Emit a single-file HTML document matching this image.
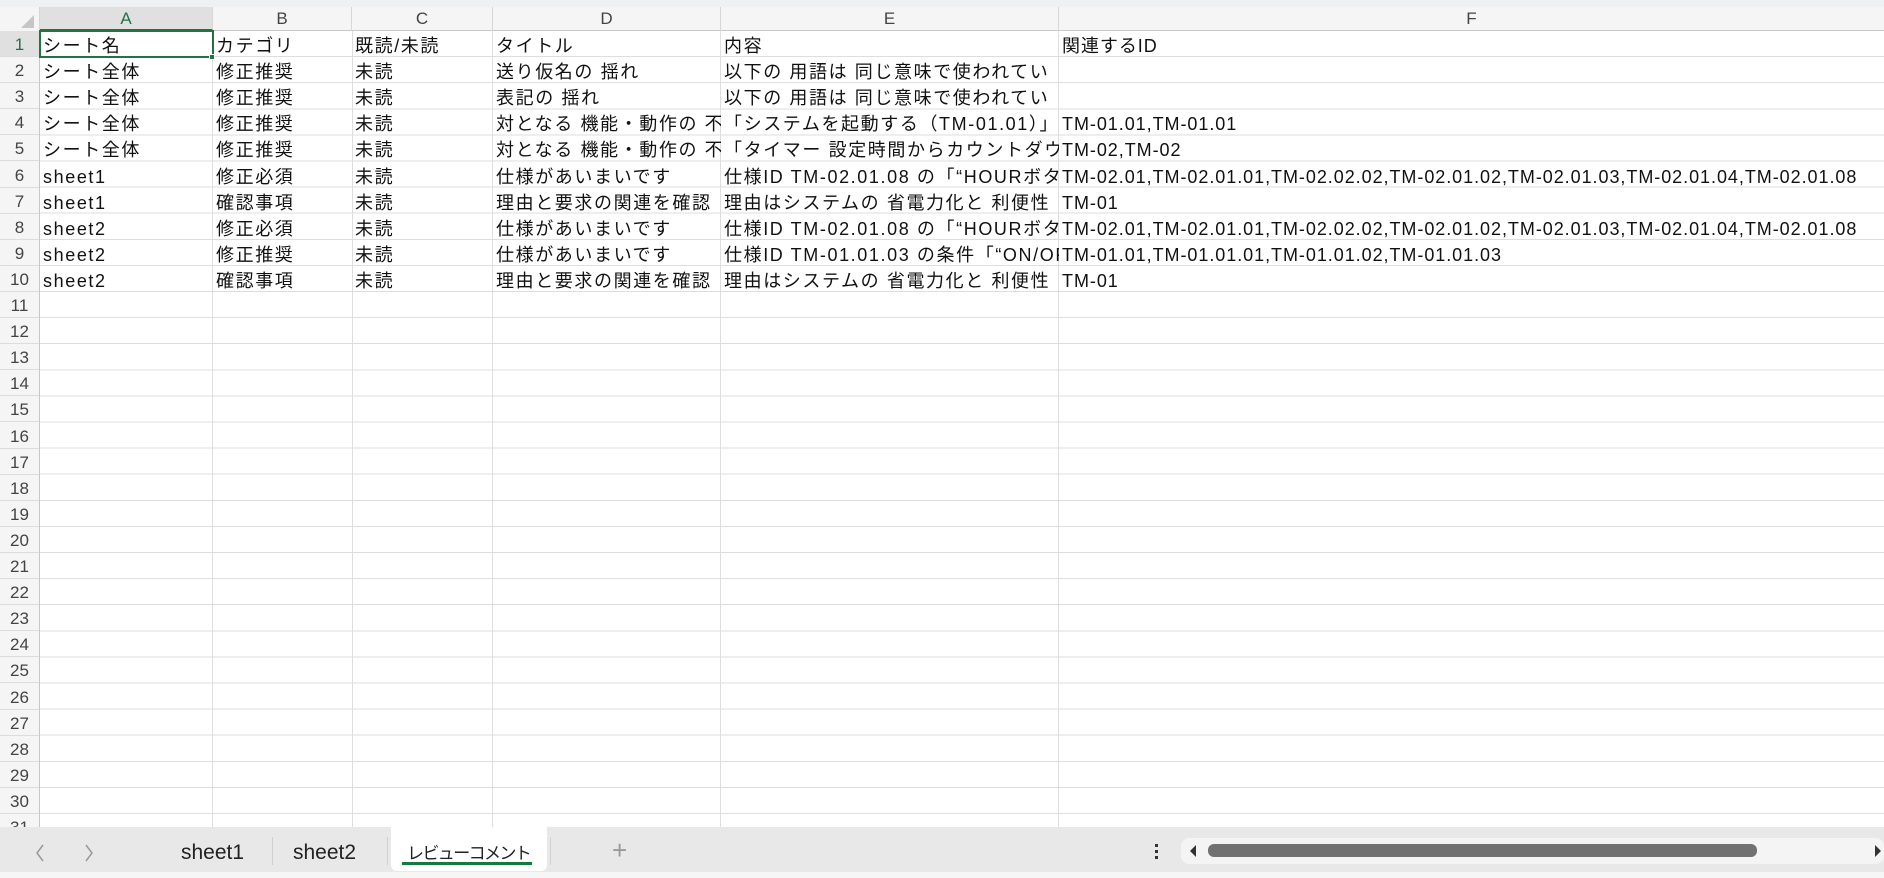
<!DOCTYPE html>
<html><head><meta charset="utf-8">
<style>
*{margin:0;padding:0;box-sizing:border-box}
html,body{width:1884px;height:878px;overflow:hidden;background:#fff;font-family:"Liberation Sans","Noto Sans CJK JP",sans-serif}
#top{position:absolute;left:0;top:0;width:1884px;height:7px;background:#eef0f3}
#colh{position:absolute;left:0;top:7px;width:1884px;height:24px;background:#f5f5f5;border-bottom:1px solid #c8c8c8}
.ch{position:absolute;top:0;height:24px;line-height:24px;text-align:center;font-size:17px;color:#444;border-right:1px solid #d6d6d6}
#rowh{position:absolute;left:0;top:31px;width:40px;height:796px;background:#f5f5f5;border-right:1px solid #c8c8c8}
.rn{position:absolute;left:0;width:39px;height:26.1px;line-height:28px;text-align:center;font-size:17px;color:#444;border-bottom:1px solid #dcdcdc}
#grid{position:absolute;left:40px;top:31px;width:1844px;height:796px;background:repeating-linear-gradient(to bottom,transparent 0,transparent 25.1px,#dedede 25.1px,#dedede 26.1px)}
.vl{position:absolute;top:31px;width:1px;height:796px;background:#dedede}
.row{position:absolute;left:0;width:1884px;height:26.1px;font-size:18px;color:#111;line-height:30px}
.row span{position:absolute;top:0;height:25px;overflow:hidden;white-space:nowrap;padding-left:3px;letter-spacing:1.6px}
.a{left:40px;width:173px}.b{left:213px;width:139px}.c{left:352px;width:141px}.d{left:493px;width:228px}.e{left:721px;width:338px}.row .f{left:1059px;width:825px;letter-spacing:0.95px}
#sel{position:absolute;left:39px;top:30px;width:175px;height:28px;border:2px solid #217346}
#selh{position:absolute;left:209px;top:54px;width:6px;height:6px;background:#217346;border:1px solid #fff}
#tabs{position:absolute;left:0;top:827px;width:1884px;height:51px;background:#e9e8e8}
.tt{position:absolute;top:14px;font-size:21px;color:#222}
.sep{position:absolute;top:10px;width:1px;height:28px;background:#d0d0d0}
</style></head><body>
<div id="top"></div>
<div id="colh">
<div class="ch" style="left:0;width:40px;background:#f5f5f5"><svg width="40" height="24"><polygon points="34,8 34,21 21,21" fill="#c6c6c6"/></svg></div>
<div class="ch" style="left:40px;width:173px;background:#e0e0e0;color:#217346;border-bottom:2px solid #217346">A</div>
<div class="ch" style="left:213px;width:139px">B</div>
<div class="ch" style="left:352px;width:141px">C</div>
<div class="ch" style="left:493px;width:228px">D</div>
<div class="ch" style="left:721px;width:338px">E</div>
<div class="ch" style="left:1059px;width:825px;border-right:none">F</div>
</div>
<div id="grid"></div>
<div class="vl" style="left:212px"></div><div class="vl" style="left:352px"></div><div class="vl" style="left:492px"></div><div class="vl" style="left:720px"></div><div class="vl" style="left:1058px"></div>
<div id="rowh">
<div class="rn" style="top:0;background:#e0e0e0;color:#217346">1</div>
<div class="rn" style="top:26.1px">2</div><div class="rn" style="top:52.2px">3</div><div class="rn" style="top:78.3px">4</div><div class="rn" style="top:104.4px">5</div><div class="rn" style="top:130.5px">6</div><div class="rn" style="top:156.6px">7</div><div class="rn" style="top:182.7px">8</div><div class="rn" style="top:208.8px">9</div><div class="rn" style="top:234.9px">10</div><div class="rn" style="top:261px">11</div><div class="rn" style="top:287.1px">12</div><div class="rn" style="top:313.2px">13</div><div class="rn" style="top:339.3px">14</div><div class="rn" style="top:365.4px">15</div><div class="rn" style="top:391.5px">16</div><div class="rn" style="top:417.6px">17</div><div class="rn" style="top:443.7px">18</div><div class="rn" style="top:469.8px">19</div><div class="rn" style="top:495.9px">20</div><div class="rn" style="top:522px">21</div><div class="rn" style="top:548.1px">22</div><div class="rn" style="top:574.2px">23</div><div class="rn" style="top:600.3px">24</div><div class="rn" style="top:626.4px">25</div><div class="rn" style="top:652.5px">26</div><div class="rn" style="top:678.6px">27</div><div class="rn" style="top:704.7px">28</div><div class="rn" style="top:730.8px">29</div><div class="rn" style="top:756.9px">30</div><div class="rn" style="top:783px">31</div>
</div>
<div class="row" style="top:31px"><span class="a">シート名</span><span class="b">カテゴリ</span><span class="c">既読/未読</span><span class="d">タイトル</span><span class="e">内容</span><span class="f">関連するID</span></div>
<div class="row" style="top:57.1px"><span class="a">シート全体</span><span class="b">修正推奨</span><span class="c">未読</span><span class="d">送り仮名の 揺れ</span><span class="e">以下の 用語は 同じ意味で使われてい</span></div>
<div class="row" style="top:83.2px"><span class="a">シート全体</span><span class="b">修正推奨</span><span class="c">未読</span><span class="d">表記の 揺れ</span><span class="e">以下の 用語は 同じ意味で使われてい</span></div>
<div class="row" style="top:109.3px"><span class="a">シート全体</span><span class="b">修正推奨</span><span class="c">未読</span><span class="d">対となる 機能・動作の 不</span><span class="e">「システムを起動する（TM-01.01）」と「</span><span class="f">TM-01.01,TM-01.01</span></div>
<div class="row" style="top:135.4px"><span class="a">シート全体</span><span class="b">修正推奨</span><span class="c">未読</span><span class="d">対となる 機能・動作の 不</span><span class="e">「タイマー 設定時間からカウントダウン</span><span class="f">TM-02,TM-02</span></div>
<div class="row" style="top:161.5px"><span class="a">sheet1</span><span class="b">修正必須</span><span class="c">未読</span><span class="d">仕様があいまいです</span><span class="e">仕様ID TM-02.01.08 の「“HOURボタン</span><span class="f">TM-02.01,TM-02.01.01,TM-02.02.02,TM-02.01.02,TM-02.01.03,TM-02.01.04,TM-02.01.08</span></div>
<div class="row" style="top:187.6px"><span class="a">sheet1</span><span class="b">確認事項</span><span class="c">未読</span><span class="d">理由と要求の関連を確認</span><span class="e">理由はシステムの 省電力化と 利便性</span><span class="f">TM-01</span></div>
<div class="row" style="top:213.7px"><span class="a">sheet2</span><span class="b">修正必須</span><span class="c">未読</span><span class="d">仕様があいまいです</span><span class="e">仕様ID TM-02.01.08 の「“HOURボタン</span><span class="f">TM-02.01,TM-02.01.01,TM-02.02.02,TM-02.01.02,TM-02.01.03,TM-02.01.04,TM-02.01.08</span></div>
<div class="row" style="top:239.8px"><span class="a">sheet2</span><span class="b">修正推奨</span><span class="c">未読</span><span class="d">仕様があいまいです</span><span class="e">仕様ID TM-01.01.03 の条件「“ON/OFF</span><span class="f">TM-01.01,TM-01.01.01,TM-01.01.02,TM-01.01.03</span></div>
<div class="row" style="top:265.9px"><span class="a">sheet2</span><span class="b">確認事項</span><span class="c">未読</span><span class="d">理由と要求の関連を確認</span><span class="e">理由はシステムの 省電力化と 利便性</span><span class="f">TM-01</span></div>
<div id="sel"></div><div id="selh"></div>
<div id="tabs">
<svg style="position:absolute;left:33px;top:16px" width="14" height="20"><path d="M10 2 L4 10 L10 18" stroke="#999" stroke-width="1.5" fill="none"/></svg>
<svg style="position:absolute;left:82px;top:16px" width="14" height="20"><path d="M4 2 L10 10 L4 18" stroke="#999" stroke-width="1.5" fill="none"/></svg>
<span class="tt" style="left:181px">sheet1</span>
<div class="sep" style="left:272px"></div>
<span class="tt" style="left:293px">sheet2</span>
<div class="sep" style="left:387px"></div>
<div style="position:absolute;left:391px;top:0;width:156px;height:44px;background:#fff;border-radius:0 0 6px 6px"></div>
<span class="tt" style="left:407px;font-size:17px;letter-spacing:-1.6px;top:12px">レビューコメント</span>
<div style="position:absolute;left:402px;top:35px;width:130px;height:3px;background:#107c41"></div>
<div class="sep" style="left:550px"></div>
<span class="tt" style="left:612px;color:#999;font-size:26px;top:8px">+</span>
<div style="position:absolute;left:1155px;top:17px;width:3px;height:3px;background:#333;box-shadow:0 6px 0 #333,0 12px 0 #333"></div>
<div style="position:absolute;left:1181px;top:11px;width:703px;height:26px;background:#f4f4f4;border-radius:8px"></div>
<svg style="position:absolute;left:1188px;top:17px" width="10" height="14"><polygon points="8,1 2,7 8,13" fill="#333"/></svg>
<div style="position:absolute;left:1208px;top:17px;width:549px;height:13px;background:#717171;border-radius:6px"></div>
<svg style="position:absolute;left:1873px;top:17px" width="10" height="14"><polygon points="2,1 8,7 2,13" fill="#333"/></svg>
</div>
<div style="position:absolute;left:0;top:872px;width:1884px;height:6px;background:#f6f6f6"></div>
</body></html>
